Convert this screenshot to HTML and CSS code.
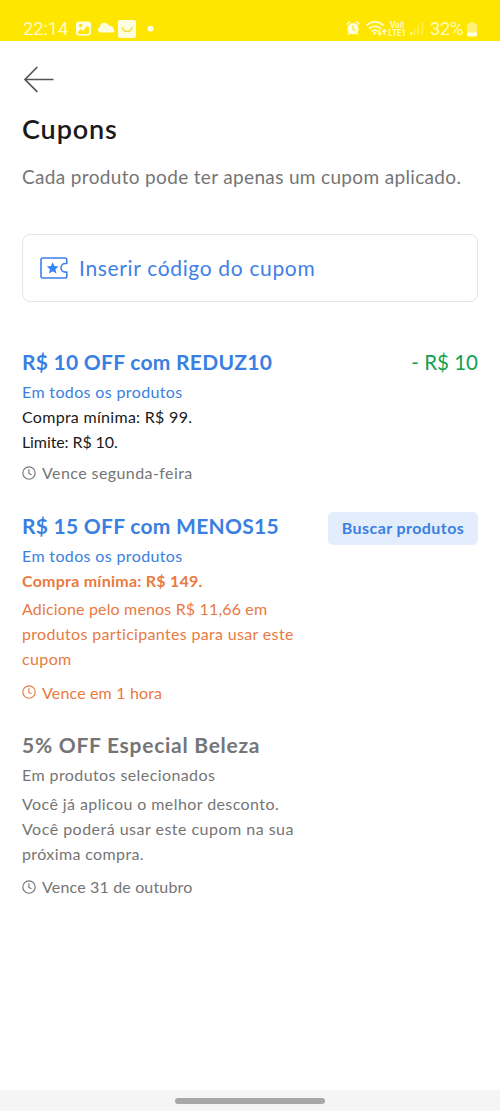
FILE: index.html
```html
<!DOCTYPE html>
<html lang="pt-BR">
<head>
<meta charset="utf-8">
<title>Cupons</title>
<link rel="stylesheet" href="styles.css">
</head>
<body>
<svg width="0" height="0" class="defs">
  <symbol id="clock" viewBox="0 0 14 14"><g fill="none" stroke="currentColor" stroke-width="1.15"><circle cx="7" cy="7" r="6.2"/><path d="M6.9 3.3V7.4L9.5 8.7"/></g></symbol>
</svg>
<div class="status">
  <span class="time">22:14</span>
  <svg class="status-left" width="80" height="20" viewBox="0 0 80 20">
    <path fill="#fffde0" fill-rule="evenodd" d="M3 3.500h9q3 0 3 3v8q0 3-3 3H3q-3 0-3-3v-8q0-3 3-3zM2 14v.5q0 1.500 1.500 1.500h8q1.500 0 1.500-1.500v-5l-2-1.500-4 5-2.500-2zM3 7.500a1.700 1.700 0 1 0 3.400 0a1.700 1.700 0 1 0-3.400 0z"/>
    <path fill="#fffde0" d="M24 14.500a3 3 0 0 1-.3-5.600C24.500 4.500 30.500 3 33 7.800c2.500-.5 4.500 1.500 4.700 3.700 1.500.8 1 3-1 3z"/>
    <rect fill="#fffde0" x="42" y="2" width="18" height="18" rx="2"/>
    <path fill="none" stroke="#f2dc30" stroke-width="1.300" d="M46.200 9q1 4.500 5 4.500t5-4.500"/>
    <circle fill="#fffde0" cx="74.500" cy="10.700" r="2.900"/>
  </svg>
  <svg class="status-right" width="78" height="20" viewBox="0 0 78 20">
    <circle cx="7" cy="10.700" r="5.600" fill="#fffde0"/>
    <path fill="none" stroke="#fffde0" stroke-width="1.500" stroke-linecap="round" d="M1.100 6l2.500-2.300M12.900 6l-2.500-2.300M3.300 14.500l-1 1.800M10.700 14.500l1 1.800"/>
    <path fill="none" stroke="#ffe600" stroke-width="1.200" d="M7 7.500v3.700l2.300 1.300"/>
    <g fill="none" stroke="#fffbc8" stroke-width="1.800"><path d="M20.500 7.500q8.500-7.500 17 0M23 10.700q6-5 12 0M25.700 13.500q3.300-2.700 6.600 0"/><path stroke-width="1.300" d="M33.700 11.500v5.500M31.700 14.700l2 2.300 2-2.300M38.200 17v-5.500M36.200 13.800l2-2.300 2 2.300"/></g>
    <circle cx="28.500" cy="15.200" r="1.300" fill="#fffbc8"/>
    <text x="44" y="9.500" textLength="9.500" lengthAdjust="spacingAndGlyphs" class="volte">Vo</text>
    <path fill="none" stroke="#fffbc8" stroke-width="1.100" d="M54 3.700q1.400 2.800 0 6M56.300 3.200q1.800 3.400 0 6.800"/>
    <text x="42.500" y="17.800" textLength="17.500" lengthAdjust="spacingAndGlyphs" class="volte">LTE1</text>
    <g fill="#fffbc8"><rect x="64.500" y="14" width="1.700" height="2.800"/><g opacity=".4"><rect x="67.700" y="11" width="1.700" height="5.800"/><rect x="71.200" y="7.500" width="1.700" height="9.300"/><rect x="75.500" y="4" width="1.700" height="12.800"/></g></g>
  </svg>
  <span class="percent">32%</span>
  <svg class="battery" width="10" height="15" viewBox="0 0 10 15"><path fill="#fff176" d="M3 0h4v1.500h1.500Q10 1.500 10 3v8H0V3q0-1.500 1.500-1.500H3z"/><path fill="#fffde8" d="M0 10.500h10v2.500q0 1.500-1.500 1.500h-7Q0 14.500 0 13z"/></svg>
</div>
<main class="page">
  <svg class="back" width="32" height="28" viewBox="0 0 32 28"><path fill="none" stroke="#555" stroke-width="1.700" d="M15.300 2L3 14.500l12.300 12.300M3 14.500H31.500"/></svg>
  <h1 class="heading">Cupons</h1>
  <p class="intro">Cada produto pode ter apenas um cupom aplicado.</p>
  <div class="entry">
    <svg width="28" height="22" viewBox="0 0 28 22"><path fill="none" stroke="#3f80e8" stroke-width="1.600" stroke-linejoin="round" d="M2.500 1H25q1.800 0 1.800 1.800V6.500h-1.500a4.300 4.300 0 0 0 0 8.600h1.500v4.100q0 1.800-1.800 1.800H2.500Q1 21 1 19.500v-17Q1 1 2.500 1z"/><path fill="#3483fa" d="M12.700 5.200l1.700 3.900 4.200.4-3.200 2.800 1 4.200-3.700-2.200L9 16.500l1-4.200-3.200-2.800 4.200-.4z"/></svg>
    <span class="entry-text">Inserir código do cupom</span>
  </div>
  <section class="coupon first">
    <div class="info">
      <h2 class="title blue t1">R$ 10 OFF com REDUZ10</h2>
      <p class="line blue scope">Em todos os produtos</p>
      <p class="line black l1">Compra mínima: R$ 99.</p>
      <p class="line black l2">Limite: R$ 10.</p>
      <p class="expiry e1"><svg width="14" height="14"><use href="#clock"/></svg><span>Vence segunda-feira</span></p>
    </div>
    <span class="amount">- R$ 10</span>
  </section>
  <section class="coupon second">
    <div class="info">
      <h2 class="title blue t2">R$ 15 OFF com MENOS15</h2>
      <p class="line blue scope">Em todos os produtos</p>
      <p class="line orange strong">Compra mínima: R$ 149.</p>
      <p class="line orange detail"><span class="d1">Adicione pelo menos R$ 11,66 em</span><br><span class="d2">produtos participantes para usar este</span><br><span class="d3">cupom</span></p>
      <p class="expiry orange e2"><svg width="14" height="14"><use href="#clock"/></svg><span>Vence em 1 hora</span></p>
    </div>
    <button class="button">Buscar produtos</button>
  </section>
  <section class="coupon third">
    <div class="info">
      <h2 class="title grey t3">5% OFF Especial Beleza</h2>
      <p class="line grey s3">Em produtos selecionados</p>
      <p class="line grey detail"><span class="g1">Você já aplicou o melhor desconto.</span><br><span class="g2">Você poderá usar este cupom na sua</span><br><span class="g3">próxima compra.</span></p>
      <p class="expiry e3"><svg width="14" height="14"><use href="#clock"/></svg><span>Vence 31 de outubro</span></p>
    </div>
  </section>
</main>
<footer class="nav"><div class="handle"></div></footer>
</body>
</html>
```
FILE: styles.css
```css
* { box-sizing: border-box; margin: 0; padding: 0; }
body { height: 1111px; display: flex; flex-direction: column; background: #fff; font-family: Lato, "Liberation Sans", sans-serif; font-variant-ligatures: none; overflow: hidden; }
.defs { position: absolute; }
.status { height: 41px; flex: none; background: #ffe600; padding: 18px 23px 0; display: flex; align-items: flex-start; font-family: Roboto, sans-serif; color: #fffac2; }
.time { font-size: 18.500px; line-height: 22px; width: 53px; letter-spacing: -0.150px; }
.status-left { flex: none; }
.status-right { flex: none; margin-left: 190px; }
.percent { font-size: 18.500px; line-height: 22px; width: 36px; margin-left: 6px; letter-spacing: -0.400px; }
.battery { flex: none; margin: 4px 0 0 1px; }
.volte { font: 700 8.500px Roboto, sans-serif; fill: #fffbc8; }
.page { flex: 1; padding: 24px 22px 0; }
.back { display: block; }
.heading { margin-top: 21px; font-size: 27px; line-height: 30px; font-weight: 600; letter-spacing: 0.880px; color: #1a1a1a; }
.intro { margin-top: 20px; font-size: 19px; line-height: 25px; letter-spacing: 0.340px; color: #757575; white-space: nowrap; }
.entry { margin-top: 45px; height: 68px; border: 1.500px solid #e5e5e5; border-radius: 8px; display: flex; align-items: center; padding-left: 17px; gap: 11px; color: #3f80e8; font-size: 21px; letter-spacing: 0.660px; }
.entry-text { padding-bottom: 2px; }
.coupon { display: flex; justify-content: space-between; align-items: flex-start; white-space: nowrap; }
.first { margin-top: 45px; height: 163.500px; }
.second { height: 219.500px; }
.title { font-size: 21px; line-height: 30px; font-weight: 700; margin-bottom: 2px; }
.line, .expiry { font-size: 16px; line-height: 25px; }
.expiry { display: flex; align-items: center; gap: 6px; margin-top: 6px; color: #757575; }
.blue { color: #3a80e2; }
.black { color: #1a1a1a; }
.orange { color: #e87a42; }
.grey { color: #757575; }
.strong { font-weight: 700; }
.detail { margin-top: 3.500px; }
.detail + .expiry { margin-top: 8.500px; }
.amount { color: #12a150; font-size: 20.500px; line-height: 30px; }
.button { margin-top: 1px; width: 150px; height: 33px; padding-bottom: 2px; border: 0; border-radius: 5px; background: #e3edfb; color: #3a80e2; font: 700 16px Lato, sans-serif; letter-spacing: 0.430px; }
/* Tracking for the individual lines of coupon text */
.t1, .t2 { letter-spacing: 0.270px; }
.t3 { letter-spacing: 0.730px; }
.scope { letter-spacing: 0.360px; }
.l1 { letter-spacing: 0.290px; }
.l2 { letter-spacing: -0.100px; }
.e1 { letter-spacing: 0.420px; }
.strong { letter-spacing: 0.250px; }
.d1, .e2, .e3 { letter-spacing: 0.160px; }
.d2 { letter-spacing: 0.330px; }
.d3, .g3 { letter-spacing: 0.380px; }
.s3, .g1 { letter-spacing: 0.410px; }
.g2 { letter-spacing: 0.480px; }
.nav { height: 21px; flex: none; background: #f5f5f5; display: flex; justify-content: center; padding-top: 8px; }
.handle { width: 150px; height: 6px; border-radius: 3px; background: #a8a8a8; }
```
